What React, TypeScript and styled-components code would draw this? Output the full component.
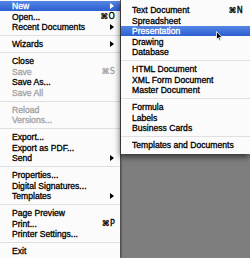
import React from 'react';
import styled, { createGlobalStyle } from 'styled-components';

const GlobalStyle = createGlobalStyle`
  html, body {
    margin: 0;
    padding: 0;
    background: #7e7e7e;
  }
`;

const Desktop = styled.div`
  position: relative;
  display: flex;
  align-items: flex-start;
  width: 250px;
  height: 258px;
  overflow: hidden;
  background: #7e7e7e;
  font-family: 'Liberation Sans', Arial, sans-serif;
  font-size: 8.6px;
  color: #000;
  -webkit-text-stroke: 0.3px currentColor;
`;

const MainMenu = styled.div`
  display: flex;
  flex-direction: column;
  flex-shrink: 0;
  align-self: stretch;
  width: 120px;
  padding-top: 0.75px;
  background: #fbfbfb;
  box-shadow: 1px 0 2px rgba(0, 0, 0, 0.55);
  z-index: 1;
`;

const SubMenu = styled.div`
  display: flex;
  flex-direction: column;
  flex: 1;
  margin-left: 1px;
  padding: 4.75px 0 3.5px;
  background: #fbfbfb;
  box-shadow: -1px 3px 6px rgba(0, 0, 0, 0.6);
  z-index: 2;
`;

const Item = styled.div<{ $active?: boolean; $disabled?: boolean; $indent: number; $right: number }>`
  display: flex;
  align-items: center;
  justify-content: space-between;
  height: 10.5px;
  padding: 0 ${p => p.$right}px 0 ${p => p.$indent}px;
  white-space: nowrap;
  color: ${p => (p.$active ? '#fff' : p.$disabled ? '#a2a2a2' : '#000')};
  background: ${p => (p.$active ? 'linear-gradient(#5486e4, #2c5fd0)' : 'transparent')};
`;

const Separator = styled.div`
  height: 6.5px;
  display: flex;
  align-items: center;

  &::after {
    content: '';
    flex: 1;
    height: 1px;
    background: #e0e0e0;
  }
`;

const Shortcut = styled.span`
  font-family: 'DejaVu Sans', 'Liberation Sans', sans-serif;
  font-size: 8px;
  letter-spacing: 0.2px;
`;

const Arrow = styled.span<{ $active?: boolean }>`
  width: 0;
  height: 0;
  margin-right: 1px;
  border-top: 3px solid transparent;
  border-bottom: 3px solid transparent;
  border-left: 4px solid ${p => (p.$active ? '#fff' : '#000')};
`;

const Cursor = styled.svg`
  position: absolute;
  left: 216px;
  top: 31px;
  z-index: 3;
`;

type Entry =
  | { sep: true }
  | { label: string; shortcut?: string; sub?: boolean; disabled?: boolean; active?: boolean; sep?: false };

const fileMenu: Entry[] = [
  { label: 'New', sub: true, active: true },
  { label: 'Open...', shortcut: '⌘O' },
  { label: 'Recent Documents', sub: true },
  { sep: true },
  { label: 'Wizards', sub: true },
  { sep: true },
  { label: 'Close' },
  { label: 'Save', shortcut: '⌘S', disabled: true },
  { label: 'Save As...' },
  { label: 'Save All', disabled: true },
  { sep: true },
  { label: 'Reload', disabled: true },
  { label: 'Versions...', disabled: true },
  { sep: true },
  { label: 'Export...' },
  { label: 'Export as PDF...' },
  { label: 'Send', sub: true },
  { sep: true },
  { label: 'Properties...' },
  { label: 'Digital Signatures...' },
  { label: 'Templates', sub: true },
  { sep: true },
  { label: 'Page Preview' },
  { label: 'Print...', shortcut: '⌘P' },
  { label: 'Printer Settings...' },
  { sep: true },
  { label: 'Exit' },
];

const newMenu: Entry[] = [
  { label: 'Text Document', shortcut: '⌘N' },
  { label: 'Spreadsheet' },
  { label: 'Presentation', active: true },
  { label: 'Drawing' },
  { label: 'Database' },
  { sep: true },
  { label: 'HTML Document' },
  { label: 'XML Form Document' },
  { label: 'Master Document' },
  { sep: true },
  { label: 'Formula' },
  { label: 'Labels' },
  { label: 'Business Cards' },
  { sep: true },
  { label: 'Templates and Documents' },
];

const renderEntries = (entries: Entry[], indent: number, right: number) =>
  entries.map((e, i) =>
    e.sep ? (
      <Separator key={i} />
    ) : (
      <Item key={i} $active={e.active} $disabled={e.disabled} $indent={indent} $right={right}>
        <span>{e.label}</span>
        {e.shortcut && <Shortcut>{e.shortcut}</Shortcut>}
        {e.sub && <Arrow $active={e.active} />}
      </Item>
    )
  );

export default function App() {
  return (
    <>
      <GlobalStyle />
      <Desktop>
        <MainMenu>{renderEntries(fileMenu, 12, 5)}</MainMenu>
        <SubMenu>{renderEntries(newMenu, 11, 7)}</SubMenu>
        <Cursor width="7" height="11" viewBox="0 0 7 11">
          <path d="M0.5 0.5 L0.5 8.5 L2.3 6.8 L3.6 9.8 L4.8 9.3 L3.6 6.4 L6.2 6.4 Z" fill="#000" stroke="#fff" strokeWidth="0.8" />
        </Cursor>
      </Desktop>
    </>
  );
}
